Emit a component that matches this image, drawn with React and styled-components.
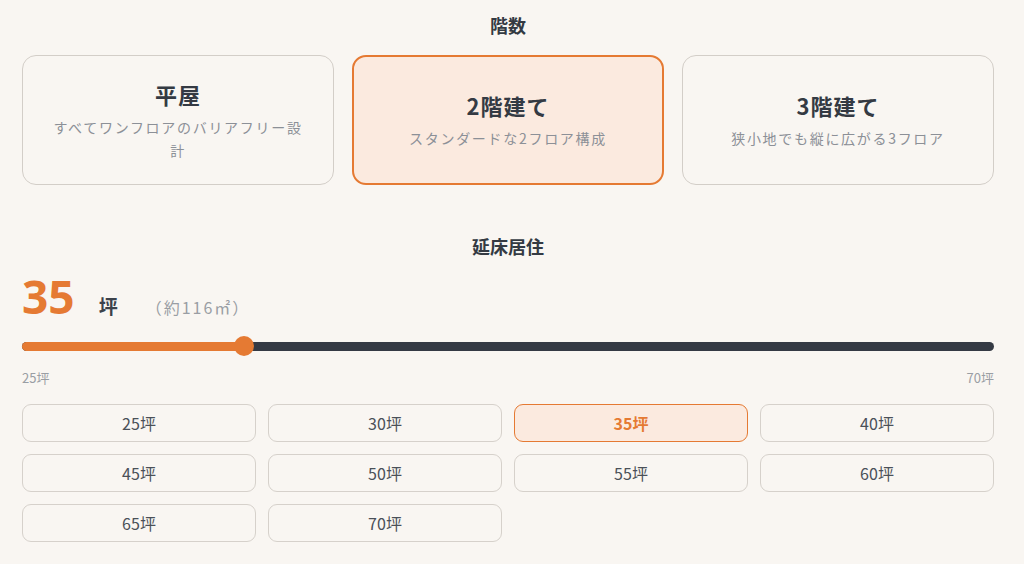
import React, { useState } from "react";
import styled, { createGlobalStyle } from "styled-components";

const GlobalStyle = createGlobalStyle`
  body {
    margin: 0;
    background: #f9f6f2;
    font-family: "Noto Sans CJK JP", "Noto Sans", sans-serif;
    color: #343a43;
  }
`;

const floors = [
  { id: 1, title: "平屋", desc: "すべてワンフロアのバリアフリー設計" },
  { id: 2, title: "2階建て", desc: "スタンダードな2フロア構成" },
  { id: 3, title: "3階建て", desc: "狭小地でも縦に広がる3フロア" },
];

const sizes = [25, 30, 35, 40, 45, 50, 55, 60, 65, 70];
const MIN = 25;
const MAX = 70;

const App = () => {
  const [floor, setFloor] = useState(2);
  const [size, setSize] = useState(35);
  const ratio = (size - MIN) / (MAX - MIN);

  return (
    <>
      <GlobalStyle />
      <Page>
        <SectionTitle>階数</SectionTitle>
        <CardRow>
          {floors.map((f) => (
            <FloorCard
              key={f.id}
              $active={floor === f.id}
              onClick={() => setFloor(f.id)}
            >
              <CardTitle>{f.title}</CardTitle>
              <CardDesc>{f.desc}</CardDesc>
            </FloorCard>
          ))}
        </CardRow>

        <SectionTitle $spaced>延床居住</SectionTitle>
        <ValueRow>
          <BigValue>{size}</BigValue>
          <Unit>坪</Unit>
          <Approx>（約{Math.round(size * 3.30579)}㎡）</Approx>
        </ValueRow>

        <Slider>
          <Track>
            <Fill style={{ width: `calc(10px + (100% - 20px) * ${ratio})` }} />
            <Thumb style={{ left: `calc((100% - 20px) * ${ratio})` }} />
          </Track>
        </Slider>
        <RangeLabels>
          <span>{MIN}坪</span>
          <span>{MAX}坪</span>
        </RangeLabels>

        <SizeGrid>
          {sizes.map((s) => (
            <SizeButton key={s} $active={size === s} onClick={() => setSize(s)}>
              {s}坪
            </SizeButton>
          ))}
        </SizeGrid>
      </Page>
    </>
  );
};

const Page = styled.div`
  width: 972px;
  padding: 12px 30px 0 22px;
`;

const SectionTitle = styled.h2`
  margin: ${(p) => (p.$spaced ? "48px 0 0" : "0 0 16px")};
  font-size: 18px;
  line-height: 27px;
  font-weight: 700;
  text-align: center;
  color: #343a43;
`;

const CardRow = styled.div`
  display: grid;
  grid-template-columns: repeat(3, 1fr);
  gap: 18px;
`;

const FloorCard = styled.div`
  height: 130px;
  box-sizing: border-box;
  padding: 0 26px;
  border-radius: 14px;
  border: ${(p) => (p.$active ? "2px solid #e57a33" : "1px solid #d3cec8")};
  background: ${(p) => (p.$active ? "#fbeadf" : "#f9f6f2")};
  display: flex;
  flex-direction: column;
  align-items: center;
  justify-content: center;
  text-align: center;
  cursor: pointer;
`;

const CardTitle = styled.div`
  font-size: 22px;
  line-height: 30px;
  font-weight: 700;
  letter-spacing: 1px;
  color: #343a43;
`;

const CardDesc = styled.div`
  margin-top: 7px;
  font-size: 14px;
  line-height: 23px;
  letter-spacing: 1.7px;
  color: #8c9097;
`;

const ValueRow = styled.div`
  display: flex;
  align-items: baseline;
  margin-top: 8px;
  height: 56px;
`;

const BigValue = styled.span`
  font-family: "Noto Sans", sans-serif;
  font-size: 46px;
  line-height: 56px;
  font-weight: 700;
  color: #e57a33;
`;

const Unit = styled.span`
  margin-left: 24px;
  font-size: 19px;
  font-weight: 700;
  color: #3c424b;
`;

const Approx = styled.span`
  margin-left: 28px;
  font-size: 16px;
  letter-spacing: 2px;
  color: #9a9ea4;
`;

const Slider = styled.div`
  margin-top: 12px;
  height: 20px;
  display: flex;
  align-items: center;
`;

const Track = styled.div`
  position: relative;
  width: 100%;
  height: 9px;
  border-radius: 5px;
  background: #353a44;
`;

const Fill = styled.div`
  height: 100%;
  border-radius: 5px 0 0 5px;
  background: #e57a33;
`;

const Thumb = styled.div`
  position: absolute;
  top: 50%;
  width: 20px;
  height: 20px;
  margin-top: -10px;
  border-radius: 50%;
  background: #e57a33;
`;

const RangeLabels = styled.div`
  display: flex;
  justify-content: space-between;
  margin-top: 13px;
  font-size: 13px;
  line-height: 18px;
  color: #9a9ea4;
`;

const SizeGrid = styled.div`
  display: grid;
  grid-template-columns: repeat(4, 1fr);
  gap: 12px;
  margin-top: 17px;
`;

const SizeButton = styled.button`
  height: 38px;
  border-radius: 9px;
  border: ${(p) => (p.$active ? "1.5px solid #e57a33" : "1px solid #d6d1cb")};
  background: ${(p) => (p.$active ? "#fbeadf" : "#f9f6f2")};
  color: ${(p) => (p.$active ? "#e57a33" : "#4a5058")};
  font-family: "Noto Sans CJK JP", "Noto Sans", sans-serif;
  font-size: 16px;
  font-weight: ${(p) => (p.$active ? 700 : 400)};
  cursor: pointer;
  padding: 0;
`;

export default App;
